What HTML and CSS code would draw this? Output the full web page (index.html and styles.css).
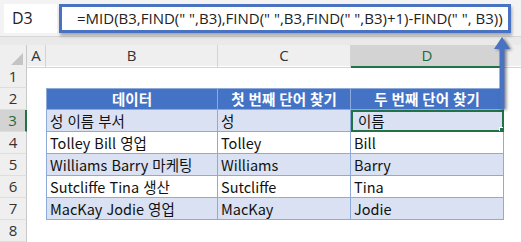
FILE: index.html
```html
<!DOCTYPE html>
<html lang="ko">
<head>
    <meta charset="UTF-8">
    <meta name="viewport" content="width=device-width, initial-scale=1.0">
    <title>MID FIND</title>
    <link rel="stylesheet" href="styles.css">
</head>
<body>

    <div class="barra">
        <div class="nombre">D3</div>
        <div class="formula">=MID(B3,FIND(" ",B3),FIND(" ",B3,FIND(" ",B3)+1)-FIND(" ", B3))</div>
    </div>
    <div class="hueco"></div>

    <div class="hoja">
        <div class="fila cabecera">
            <div class="esquina"></div>
            <div class="col">A</div>
            <div class="col">B</div>
            <div class="col">C</div>
            <div class="col activa">D</div>
            <div class="col resto"></div>
        </div>
        <div class="fila">
            <div class="num">1</div>
        </div>
        <div class="fila">
            <div class="num">2</div>
            <div></div>
            <div class="celda titulo primera">데이터</div>
            <div class="celda titulo">첫 번째 단어 찾기</div>
            <div class="celda titulo">두 번째 단어 찾기</div>
        </div>
        <div class="fila">
            <div class="num activa">3</div>
            <div></div>
            <div class="celda azul primera">성 이름 부서</div>
            <div class="celda azul">성</div>
            <div class="celda azul sel">이름</div>
        </div>
        <div class="fila">
            <div class="num">4</div>
            <div></div>
            <div class="celda primera">Tolley Bill 영업</div>
            <div class="celda">Tolley</div>
            <div class="celda">Bill</div>
        </div>
        <div class="fila">
            <div class="num">5</div>
            <div></div>
            <div class="celda azul primera">Williams Barry 마케팅</div>
            <div class="celda azul">Williams</div>
            <div class="celda azul">Barry</div>
        </div>
        <div class="fila">
            <div class="num">6</div>
            <div></div>
            <div class="celda primera">Sutcliffe Tina 생산</div>
            <div class="celda">Sutcliffe</div>
            <div class="celda">Tina</div>
        </div>
        <div class="fila">
            <div class="num">7</div>
            <div></div>
            <div class="celda azul primera">MacKay Jodie 영업</div>
            <div class="celda azul">MacKay</div>
            <div class="celda azul">Jodie</div>
        </div>
        <div class="fila">
            <div class="num">8</div>
        </div>
    </div>

    <!-- flecha de la celda a la barra de fórmulas -->
    <svg class="flecha" width="24" height="80" viewBox="0 0 24 80">
        <rect x="8.5" y="10" width="5" height="62" fill="#4a72c2"/>
        <polygon points="11,0 19,12 3,12" fill="#4a72c2"/>
    </svg>

</body>
</html>
```

FILE: styles.css
```css
body {
    margin: 0;
    width: 521px;
    height: 242px;
    overflow: hidden;
    background-color: #fff;
    font-family: "Noto Sans CJK KR", "Noto Sans", sans-serif;
    position: relative;
}

.barra {
    display: flex;
    gap: 2px;
    padding: 4px 10px 0 4px;
    height: 32px;
    background-color: #f3f3f3;
}

.nombre {
    width: 45px;
    height: 29px;
    padding-left: 8px;
    background-color: #fff;
    font-family: "Open Sans", sans-serif;
    font-size: 16px;
    line-height: 29px;
    color: #222;
}

.formula {
    flex: 1;
    height: 23px;
    border: 3px solid #4a72c2;
    background-color: #fff;
    box-shadow: 1px 3px 3px rgba(0, 0, 0, 0.3);
    padding-left: 15px;
    font-family: "Open Sans", sans-serif;
    font-size: 15px;
    line-height: 23px;
    color: #222;
    white-space: nowrap;
    overflow: hidden;
}

.hueco {
    height: 8px;
    background-color: #e9e9e9;
    border-top: 1px solid #d6d6d6;
}

.fila {
    display: grid;
    grid-template-columns: 27px 19px 172px 133px 153px 1fr;
    height: 22px;
}

.cabecera {
    height: 21px;
    background-color: #efefef;
}

.esquina {
    position: relative;
    border-right: 1px solid #c8c8c8;
}

.esquina::after {
    content: "";
    position: absolute;
    right: 3px;
    bottom: 3px;
    border-style: solid;
    border-width: 0 0 12px 12px;
    border-color: transparent transparent #c4c4c4 transparent;
}

.col {
    border-right: 1px solid #d4d4d4;
    border-bottom: 1px solid #d4d4d4;
    text-align: center;
    font-family: "Open Sans", sans-serif;
    font-size: 15px;
    line-height: 21px;
    color: #333;
}

.col.activa {
    background-color: #d3d3d3;
    border-bottom: 2px solid #217346;
    color: #1e6b40;
}

.col.resto {
    border-right: none;
}

.num {
    background-color: #efefef;
    border-right: 1px solid #c8c8c8;
    border-bottom: 1px solid #dedede;
    text-align: center;
    font-family: "Open Sans", sans-serif;
    font-size: 15px;
    line-height: 21px;
    color: #333;
}

.num.activa {
    background-color: #d3d3d3;
    border-right: 2px solid #217346;
    color: #1e6b40;
}

.celda {
    border-right: 1px solid #8eaadb;
    border-bottom: 1px solid #8eaadb;
    padding-left: 3px;
    font-size: 14.5px;
    line-height: 21px;
    color: #111;
    white-space: nowrap;
    overflow: hidden;
}

.primera {
    border-left: 1px solid #8eaadb;
}

.titulo {
    background-color: #4472c4;
    border-top: 1px solid #8eaadb;
    color: #fff;
    font-weight: bold;
    text-align: center;
    padding-left: 0;
    line-height: 20px;
}

.azul {
    background-color: #d9e1f2;
}

.sel {
    position: relative;
    outline: 2px solid #217346;
    outline-offset: -2px;
    padding-left: 7px;
}

.sel::after {
    content: "";
    position: absolute;
    right: -3px;
    bottom: -3px;
    width: 5px;
    height: 5px;
    background-color: #217346;
    border: 1px solid #fff;
}

.flecha {
    position: absolute;
    left: 491px;
    top: 37px;
    filter: drop-shadow(2px 1px 1.5px rgba(0, 0, 0, 0.45));
}
```
